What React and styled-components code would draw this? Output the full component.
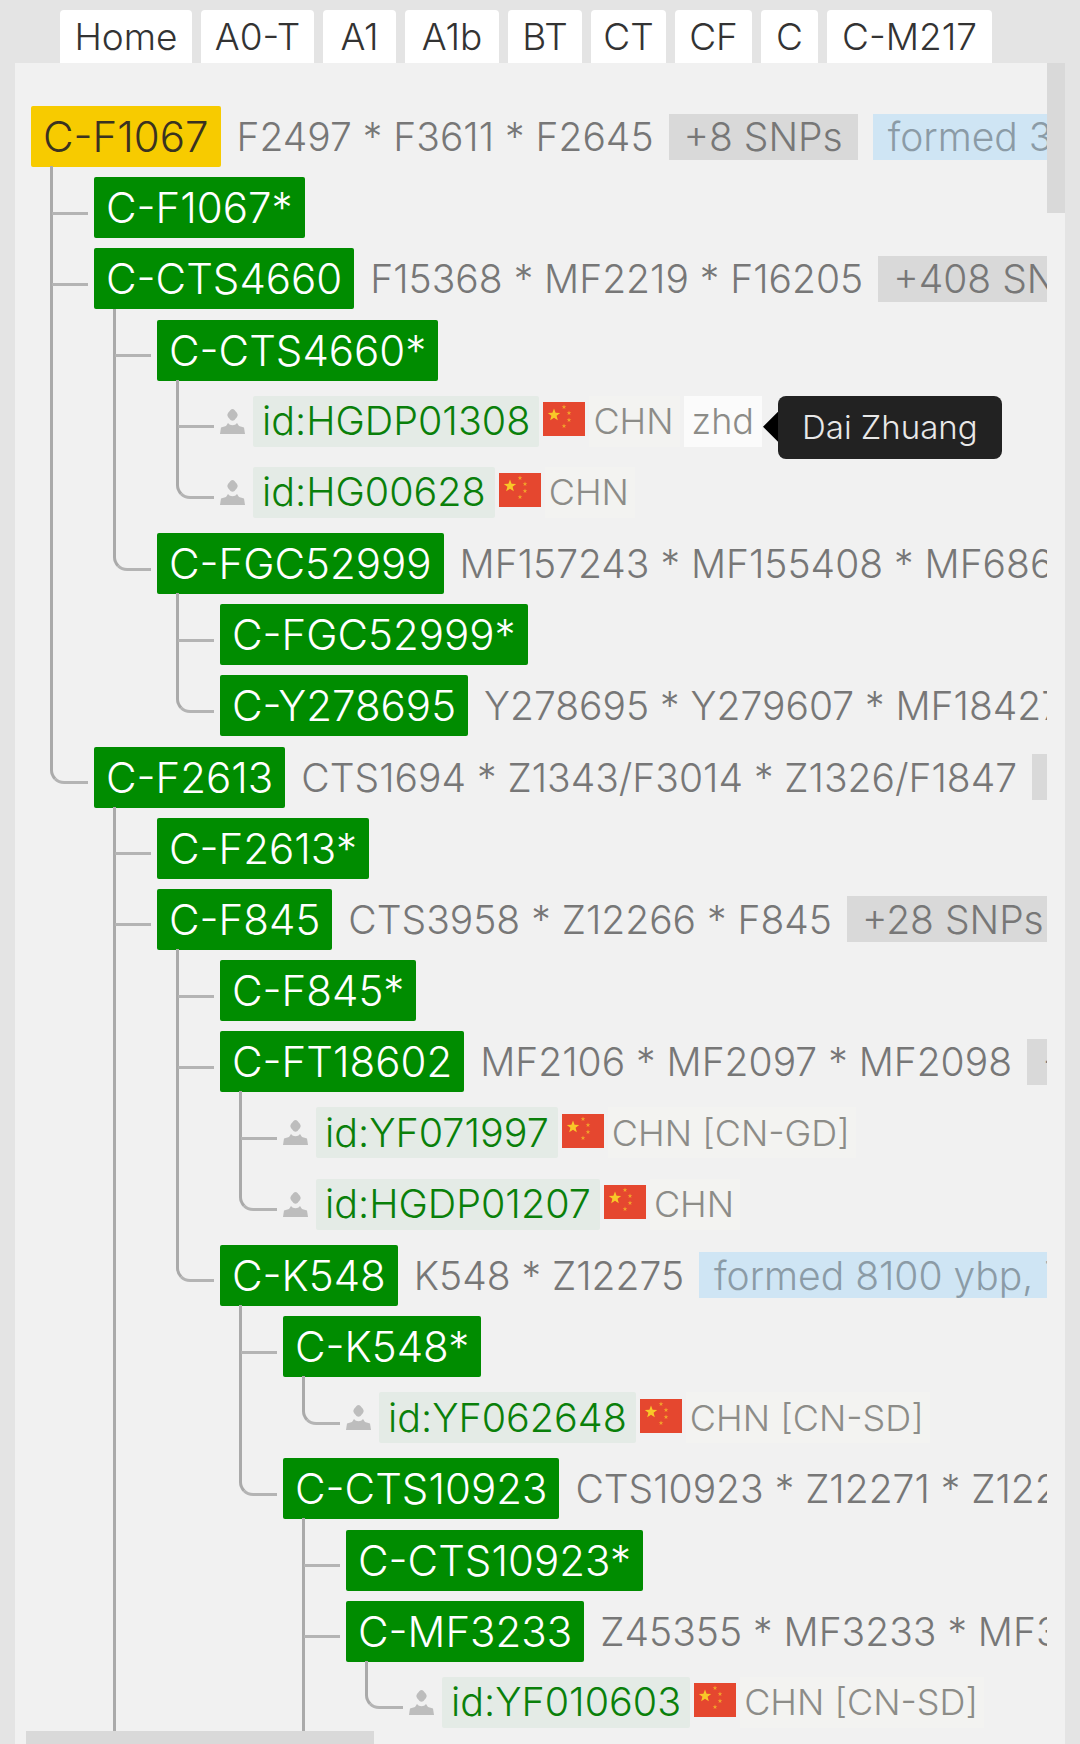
import React from 'react';
import styled, { createGlobalStyle } from 'styled-components';

const LINE = '#aaaaaa';
const FONT = 'Inter, "Noto Sans", sans-serif';
const ROW_HEIGHT = 71.18;
const INDENT = 63;

const GlobalStyle = createGlobalStyle`
    html, body {
        margin: 0;
        padding: 0;
        background: #e4e4e4;
        font-family: ${FONT};
    }
`;

const Page = styled.div`
    width: 1080px;
    height: 1744px;
    overflow: hidden;
    display: flex;
    flex-direction: column;
    padding: 10px 15px 0;
    box-sizing: border-box;
`;

const TabBar = styled.nav`
    display: flex;
    gap: 9px;
    height: 53px;
    padding-left: 45px;
    flex-shrink: 0;
`;

const Tab = styled.a`
    display: flex;
    align-items: center;
    justify-content: center;
    width: ${props => props.$width}px;
    background: #ffffff;
    border-radius: 4px 4px 0 0;
    color: #333333;
    font-size: 37px;
    font-weight: 300;
`;

const Panel = styled.div`
    flex: 1;
    min-height: 0;
    display: flex;
    background: #f1f1f1;
`;

const PanelBody = styled.div`
    flex: 1;
    min-width: 0;
    display: flex;
    flex-direction: column;
`;

const Scroller = styled.div`
    flex: 1;
    min-height: 0;
    overflow: hidden;
    padding: 38px 0 0 16px;
`;

const VTrack = styled.div`
    width: 18px;
    flex-shrink: 0;
`;

const VThumb = styled.div`
    height: 150px;
    background: #d9d9d9;
`;

const HTrack = styled.div`
    height: 13px;
    flex-shrink: 0;
    padding-left: 11px;
`;

const HThumb = styled.div`
    width: 348px;
    height: 100%;
    background: #d9d9d9;
`;

const Children = styled.ul`
    list-style: none;
    margin: 0 0 0 ${props => (props.$root ? 0 : INDENT)}px;
    padding: 0;
`;

const Branch = styled.li`
    position: relative;

    &::before {
        content: ${props => (props.$root ? 'none' : '""')};
        position: absolute;
        left: -44px;
        top: -6px;
        box-sizing: border-box;
        border-left: 3px solid ${LINE};
        ${props => props.$last ? `
            width: 38px;
            height: ${ROW_HEIGHT / 2 + 13}px;
            border-bottom: 3px solid #b4b4b4;
            border-bottom-left-radius: 14px;
        ` : `
            bottom: 0;
        `}
    }

    &::after {
        content: ${props => (props.$root || props.$last ? 'none' : '""')};
        position: absolute;
        left: -42px;
        top: ${ROW_HEIGHT / 2 + 4}px;
        width: 36px;
        height: 3px;
        background: #b4b4b4;
    }
`;

const Row = styled.div`
    display: flex;
    align-items: center;
    box-sizing: border-box;
    height: ${ROW_HEIGHT}px;
    white-space: nowrap;
`;

const Tag = styled.span`
    display: flex;
    align-items: center;
    height: 61px;
    padding: 0 12px;
    border-radius: 2px;
    font-size: 42px;
    font-weight: 300;
    background: ${props => (props.$root ? '#f7cb00' : '#008c00')};
    color: ${props => (props.$root ? '#3a3220' : '#ffffff')};
`;

const SnpList = styled.span`
    margin-left: 16px;
    color: #777777;
    font-size: 39px;
    font-weight: 300;
`;

const Pill = styled.span`
    display: flex;
    align-items: center;
    height: 46px;
    margin-left: 15px;
    padding: 0 15px;
    color: ${props => (props.$age ? '#8b9ba6' : '#777777')};
    background: ${props => (props.$age ? '#cfe5f4' : '#d9d9d9')};
    font-size: 39px;
    font-weight: 300;
`;

const PersonIcon = styled.svg`
    width: 25px;
    height: 25px;
    margin: 0 8px 0 0;
    flex-shrink: 0;
`;

const SampleId = styled.span`
    display: flex;
    align-items: center;
    height: 51px;
    padding: 0 9px;
    border-radius: 2px;
    background: #e4ebe6;
    color: #0a800a;
    font-size: 39.5px;
    font-weight: 300;
`;

const Flag = styled.svg`
    width: 42px;
    height: 34px;
    margin: 0 4px 4px;
    flex-shrink: 0;
`;

const Country = styled.span`
    display: flex;
    align-items: center;
    height: 51px;
    padding: 0 6px 0 4px;
    background: #f3f3f1;
    color: #8c8c88;
    font-size: 36px;
    font-weight: 300;
`;

const Lang = styled.span`
    position: relative;
    display: flex;
    align-items: center;
    height: 51px;
    margin-left: 4px;
    padding: 0 8px;
    background: #fbfbfb;
    color: #8c8c88;
    font-size: 36px;
    font-weight: 300;
`;

const Tooltip = styled.span`
    position: absolute;
    left: calc(100% + 16px);
    top: 0;
    display: flex;
    align-items: center;
    height: 63px;
    padding: 0 24px;
    border-radius: 8px;
    background: #222222;
    color: #e8e8e8;
    font-size: 33px;
    font-weight: 300;

    &::before {
        content: "";
        position: absolute;
        left: -15px;
        top: 16px;
        width: 15px;
        height: 30px;
        background: #000000;
        clip-path: polygon(100% 0, 0 50%, 100% 100%);
    }
`;

function Person() {
    return (
        <PersonIcon viewBox="0 0 25 25" fill="#bdbdbd">
            <path d="M12.5 0 Q13.5 0 14.5 1 L17 4 Q18.5 6 17 8 L14.5 11 Q12.5 12.5 10.5 11 L8 8 Q6.5 6 8 4 L10.5 1 Q11.5 0 12.5 0 Z" />
            <path d="M8 14 L9.5 15.5 Q12.5 17 15.5 15.5 L17 14 L19 17 L24 18.5 L25 25 L0 25 L1 18.5 L6 17 Z" />
        </PersonIcon>
    );
}

// five pointed star as a polygon, used by the flag only
function starPoints(cx, cy, r) {
    const points = [];
    for (let i = 0; i < 10; i++) {
        const radius = i % 2 === 0 ? r : r * 0.42;
        const angle = -Math.PI / 2 + (i * Math.PI) / 5;
        points.push(`${cx + radius * Math.cos(angle)},${cy + radius * Math.sin(angle)}`);
    }
    return points.join(' ');
}

function ChinaFlag() {
    return (
        <Flag viewBox="0 0 42 34">
            <rect width="42" height="34" fill="#e5472f" />
            <polygon points={starPoints(11, 13, 6.5)} fill="#f8c828" />
            <polygon points={starPoints(21, 5, 2.4)} fill="#f2a32b" />
            <polygon points={starPoints(26, 11, 2.4)} fill="#f2a32b" />
            <polygon points={starPoints(26, 18, 2.4)} fill="#f2a32b" />
            <polygon points={starPoints(21, 24, 2.4)} fill="#f2a32b" />
        </Flag>
    );
}

const TABS = [
    ['Home', 132], ['A0-T', 113], ['A1', 73], ['A1b', 94], ['BT', 74],
    ['CT', 75], ['CF', 77], ['C', 57], ['C-M217', 165]
];

const TREE = {
    name: 'C-F1067',
    snps: 'F2497 * F3611 * F2645',
    more: '+8 SNPs',
    age: 'formed 35500 ybp',
    children: [
        { name: 'C-F1067*' },
        {
            name: 'C-CTS4660',
            snps: 'F15368 * MF2219 * F16205',
            more: '+408 SNPs',
            children: [
                {
                    name: 'C-CTS4660*',
                    children: [
                        { sample: 'id:HGDP01308', country: 'CHN', lang: 'zhd', tooltip: 'Dai Zhuang' },
                        { sample: 'id:HG00628', country: 'CHN' }
                    ]
                },
                {
                    name: 'C-FGC52999',
                    snps: 'MF157243 * MF155408 * MF68612',
                    children: [
                        { name: 'C-FGC52999*' },
                        { name: 'C-Y278695', snps: 'Y278695 * Y279607 * MF184270' }
                    ]
                }
            ]
        },
        {
            name: 'C-F2613',
            snps: 'CTS1694 * Z1343/F3014 * Z1326/F1847',
            more: '+26 SNPs',
            children: [
                { name: 'C-F2613*' },
                {
                    name: 'C-F845',
                    continues: true,
                    snps: 'CTS3958 * Z12266 * F845',
                    more: '+28 SNPs',
                    children: [
                        { name: 'C-F845*' },
                        {
                            name: 'C-FT18602',
                            snps: 'MF2106 * MF2097 * MF2098',
                            more: '+15 SNPs',
                            children: [
                                { sample: 'id:YF071997', country: 'CHN [CN-GD]' },
                                { sample: 'id:HGDP01207', country: 'CHN' }
                            ]
                        },
                        {
                            name: 'C-K548',
                            snps: 'K548 * Z12275',
                            age: 'formed 8100 ybp, TMRCA',
                            children: [
                                {
                                    name: 'C-K548*',
                                    children: [
                                        { sample: 'id:YF062648', country: 'CHN [CN-SD]' }
                                    ]
                                },
                                {
                                    name: 'C-CTS10923',
                                    snps: 'CTS10923 * Z12271 * Z12209',
                                    children: [
                                        { name: 'C-CTS10923*' },
                                        {
                                            name: 'C-MF3233',
                                            continues: true,
                                            snps: 'Z45355 * MF3233 * MF3234',
                                            children: [
                                                { sample: 'id:YF010603', country: 'CHN [CN-SD]' }
                                            ]
                                        }
                                    ]
                                }
                            ]
                        }
                    ]
                }
            ]
        }
    ]
};

function TreeNode({ node, root, last }) {
    const { name, snps, more, age, children, sample, country, lang, tooltip, continues } = node;

    return (
        <Branch $root={root} $last={last && !continues}>
            {sample ? (
                <Row>
                    <Person />
                    <SampleId>{sample}</SampleId>
                    <ChinaFlag />
                    <Country>{country}</Country>
                    {lang && (
                        <Lang>
                            {lang}
                            {tooltip && <Tooltip>{tooltip}</Tooltip>}
                        </Lang>
                    )}
                </Row>
            ) : (
                <Row>
                    <Tag $root={root}>{name}</Tag>
                    {snps && <SnpList>{snps}</SnpList>}
                    {more && <Pill>{more}</Pill>}
                    {age && <Pill $age>{age}</Pill>}
                </Row>
            )}
            {children && (
                <Children>
                    {children.map((child, i) => (
                        <TreeNode
                            key={child.name || child.sample}
                            node={child}
                            last={i === children.length - 1}
                        />
                    ))}
                </Children>
            )}
        </Branch>
    );
}

function App() {
    return (
        <Page>
            <GlobalStyle />
            <TabBar>
                {TABS.map(([label, width]) => (
                    <Tab key={label} $width={width}>{label}</Tab>
                ))}
            </TabBar>
            <Panel>
                <PanelBody>
                    <Scroller>
                        <Children $root>
                            <TreeNode node={TREE} root />
                        </Children>
                    </Scroller>
                    <HTrack>
                        <HThumb />
                    </HTrack>
                </PanelBody>
                <VTrack>
                    <VThumb />
                </VTrack>
            </Panel>
        </Page>
    );
}

export default App;
